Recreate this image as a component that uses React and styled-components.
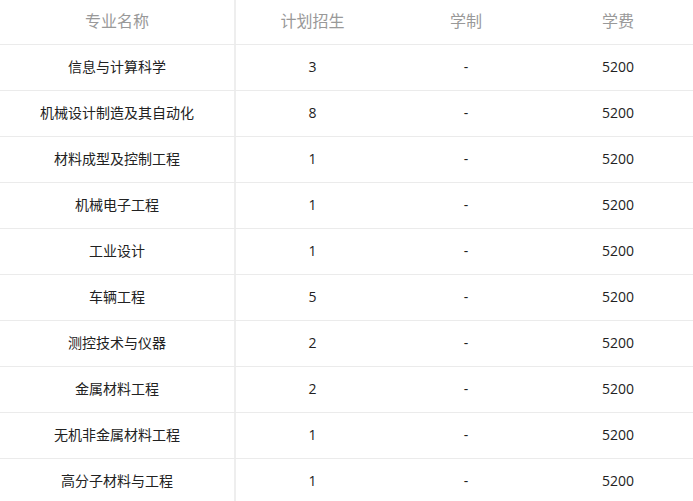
import styled, { createGlobalStyle } from "styled-components";

const GlobalStyle = createGlobalStyle`
  body {
    margin: 0;
    background: #fff;
    overflow: hidden;
    font-family: "Open Sans", "Noto Sans CJK SC", sans-serif;
  }
`;

const Table = styled.div`
  width: 693px;
  display: flex;
  flex-direction: column;
`;

const Row = styled.div`
  display: grid;
  grid-template-columns: 236px 153px 154px 150px;
  height: ${(p) => (p.$head ? "44px" : "45px")};
  border-bottom: 1px solid #ebebeb;
`;

const Cell = styled.div`
  display: flex;
  align-items: center;
  justify-content: center;
  padding-bottom: ${(p) => (p.$head ? "5px" : "3px")};
  font-size: ${(p) => (p.$head ? "16px" : "14px")};
  color: ${(p) => (p.$head ? "#999" : "#222")};
  border-right: ${(p) => (p.$first ? "2px solid #eee" : "none")};
`;

const head = ["专业名称", "计划招生", "学制", "学费"];

const rows = [
  ["信息与计算科学", 3],
  ["机械设计制造及其自动化", 8],
  ["材料成型及控制工程", 1],
  ["机械电子工程", 1],
  ["工业设计", 1],
  ["车辆工程", 5],
  ["测控技术与仪器", 2],
  ["金属材料工程", 2],
  ["无机非金属材料工程", 1],
  ["高分子材料与工程", 1],
];

export default function App() {
  return (
    <>
      <GlobalStyle />
      <Table>
        <Row $head>
          {head.map((h, i) => (
            <Cell key={h} $head $first={i === 0}>
              {h}
            </Cell>
          ))}
        </Row>
        {rows.map(([name, num]) => (
          <Row key={name}>
            <Cell $first>{name}</Cell>
            <Cell>{num}</Cell>
            <Cell>-</Cell>
            <Cell>5200</Cell>
          </Row>
        ))}
      </Table>
    </>
  );
}
